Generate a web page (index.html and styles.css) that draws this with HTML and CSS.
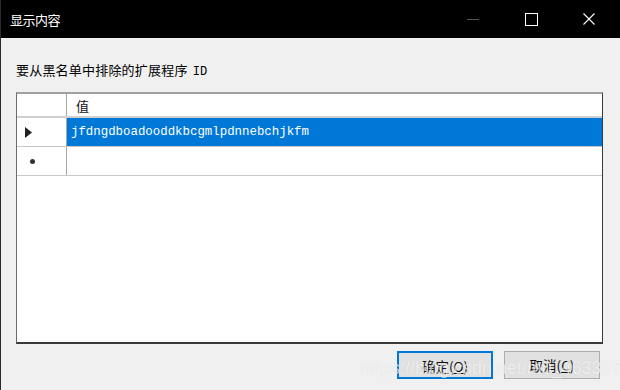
FILE: index.html
```html
<!DOCTYPE html>
<html>
<head>
<meta charset="utf-8">
<link rel="stylesheet" href="styles.css">
</head>
<body>
<div class="window">
  <div class="titlebar">
    <span class="title">显示内容</span>
    <div class="controls">
      <span class="ctl min"><span class="dash"></span></span>
      <span class="ctl max"><span class="box"></span></span>
      <span class="ctl close">
        <svg width="12" height="12" viewBox="0 0 12 12"><path d="M0.5 0.5 L11.5 11.5 M11.5 0.5 L0.5 11.5" stroke="#fff" stroke-width="1.1" fill="none"/></svg>
      </span>
    </div>
  </div>
  <div class="content">
    <div class="label">要从黑名单中排除的扩展程序 <span class="mono">ID</span></div>
    <div class="grid">
      <div class="row header">
        <div class="rh"></div>
        <div class="cell">值</div>
      </div>
      <div class="row">
        <div class="rh"><svg width="7" height="11" viewBox="0 0 7 11"><path d="M0 0 L7 5.5 L0 11 Z" fill="#222"/></svg></div>
        <div class="cell selected">jfdngdboadooddkbcgmlpdnnebchjkfm</div>
      </div>
      <div class="row">
        <div class="rh"><span class="dot"></span></div>
        <div class="cell"></div>
      </div>
    </div>
    <div class="buttons">
      <button class="btn default">确定(<u>O</u>)</button>
      <button class="btn">取消(<u>C</u>)</button>
    </div>
  </div>
  <div class="watermark">https://blog.csdn.net/m0_46335749</div>
  <div class="grip">
    <svg width="10" height="10" viewBox="0 0 10 10">
      <rect x="8" y="2" width="1" height="1" fill="#a0a0a0"/>
      <rect x="5" y="5" width="1" height="1" fill="#a0a0a0"/>
      <rect x="8" y="5" width="1" height="1" fill="#a0a0a0"/>
      <rect x="2" y="8" width="1" height="1" fill="#a0a0a0"/>
      <rect x="5" y="8" width="1" height="1" fill="#a0a0a0"/>
      <rect x="8" y="8" width="1" height="1" fill="#a0a0a0"/>
    </svg>
  </div>
</div>
</body>
</html>
```
FILE: styles.css
```css
html, body {
  margin: 0;
  padding: 0;
}
body {
  width: 620px;
  height: 390px;
  overflow: hidden;
  font-family: "Noto Sans CJK SC", "Noto Sans", sans-serif;
}
.window {
  position: relative;
  width: 619px;
  height: 390px;
  background: #f0f0f0;
  border-left: 1px solid #2a2a2a;
}
.titlebar {
  height: 38px;
  background: #000;
  display: flex;
  align-items: center;
  justify-content: space-between;
}
.title {
  color: #fff;
  font-size: 13px;
  margin-left: 9px;
  letter-spacing: -0.5px;
}
.controls {
  display: flex;
  height: 38px;
  margin-right: 2px;
}
.ctl {
  width: 58px;
  height: 38px;
  display: flex;
  align-items: center;
  justify-content: center;
}
.dash {
  width: 12px;
  height: 1px;
  background: #555;
}
.box {
  width: 11px;
  height: 11px;
  border: 1px solid #fff;
}
.content {
  padding: 0 0 0 15px;
}
.label {
  margin-top: 22px;
  height: 20px;
  line-height: 20px;
  font-size: 13px;
  color: #000;
  letter-spacing: 0.2px;
}
.mono {
  font-family: "Liberation Mono", monospace;
  font-size: 12px;
  margin-left: 2px;
}
.grid {
  margin-top: 12px;
  width: 585px;
  height: 248px;
  background: #fff;
  border-top: 2px solid #a0a0a0;
  border-left: 1px solid #6b6b6b;
  border-right: 1px solid #3a3a3a;
  border-bottom: 2px solid #3a3a3a;
  box-sizing: content-box;
}
.row {
  display: flex;
  height: 28px;
  border-bottom: 1px solid #c8c8c8;
}
.row.header {
  height: 22px;
  border-bottom: 2px solid #d0d0d0;
}
.rh {
  width: 50px;
  flex: none;
  border-right: 1px solid #a8a8a8;
  display: flex;
  align-items: center;
  padding-left: 8px;
  box-sizing: border-box;
}
.dot {
  width: 5px;
  height: 5px;
  border-radius: 50%;
  background: #333;
  margin-left: 5px;
}
.cell {
  flex: 1;
  display: flex;
  align-items: center;
  font-size: 13px;
  color: #111;
}
.header .cell {
  padding-left: 9px;
}
.cell.selected {
  background: #0078d7;
  color: #fff;
  font-family: "Liberation Mono", monospace;
  font-size: 12.4px;
  padding-left: 4px;
}
.buttons {
  display: flex;
  justify-content: flex-end;
  gap: 11px;
  margin-top: 7px;
  margin-right: 20px;
}
.btn {
  width: 96px;
  height: 28px;
  background: #e1e1e1;
  border: 1px solid #adadad;
  font-family: "Noto Sans CJK SC", sans-serif;
  font-size: 13.5px;
  color: #111;
  padding: 0;
  line-height: 26px;
}
.btn.default {
  border: 2px solid #0078d7;
}
.btn u {
  text-decoration: underline;
}
.watermark {
  position: absolute;
  left: 360px;
  top: 358px;
  font-family: "Liberation Sans", sans-serif;
  font-size: 17.5px;
  color: rgba(255,255,255,0.7);
  text-shadow: 0 0 1px rgba(0,0,0,0.12);
  letter-spacing: 0.2px;
}
.grip {
  position: absolute;
  right: 2px;
  bottom: 1px;
  width: 10px;
  height: 10px;
}
```
